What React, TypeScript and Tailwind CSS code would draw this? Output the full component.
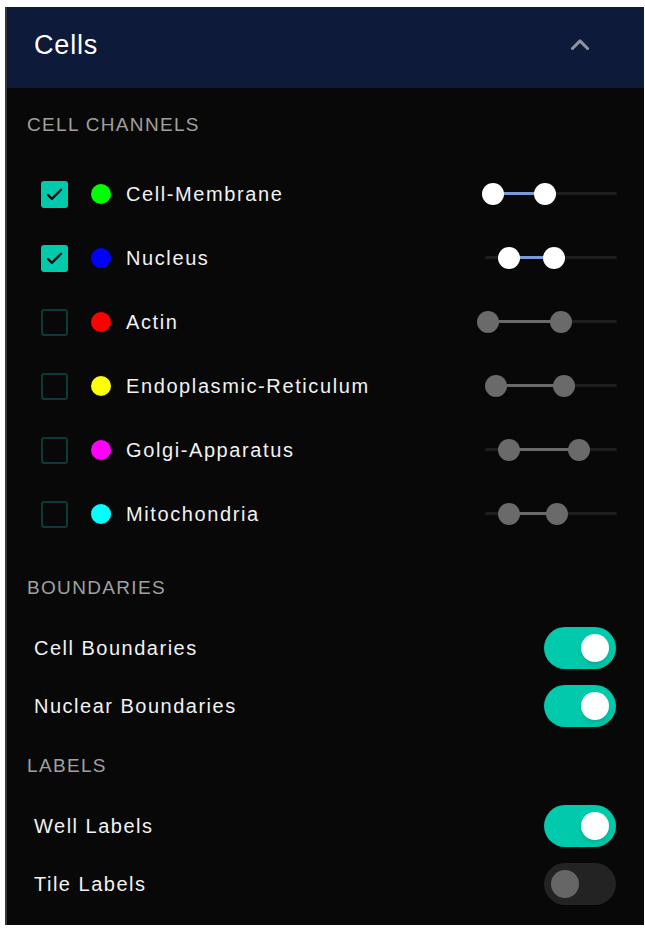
import React, { useState } from 'react';

interface Channel {
  name: string;
  color: string;
  on: boolean;
  lo: number; // thumb centre, px from track start
  hi: number;
}

const channels: Channel[] = [
  { name: 'Cell-Membrane', color: '#00ff00', on: true, lo: 8, hi: 60 },
  { name: 'Nucleus', color: '#0000ff', on: true, lo: 24, hi: 69 },
  { name: 'Actin', color: '#ff0000', on: false, lo: 3, hi: 76 },
  { name: 'Endoplasmic-Reticulum', color: '#ffff00', on: false, lo: 11, hi: 79 },
  { name: 'Golgi-Apparatus', color: '#ff00ff', on: false, lo: 24, hi: 94 },
  { name: 'Mitochondria', color: '#00ffff', on: false, lo: 24, hi: 72 },
];

const Checkbox = ({ checked }: { checked: boolean }) =>
  checked ? (
    <div className="w-[27px] h-[27px] rounded-[3px] bg-[#00c9ac] flex items-center justify-center">
      <svg width="21" height="21" viewBox="0 0 24 24" fill="none" stroke="#0b0b0b" strokeWidth="2.6" strokeLinecap="round" strokeLinejoin="round">
        <path d="M4.5 12.5l4.5 4.5L19.5 6.5" />
      </svg>
    </div>
  ) : (
    <div className="w-[27px] h-[27px] rounded-[3px] border-2 border-[#0d3a35]" />
  );

const RangeSlider = ({ on, lo, hi }: { on: boolean; lo: number; hi: number }) => (
  <div className="relative w-[132px] h-[22px] ml-auto">
    <div className="absolute left-0 right-0 top-[9px] h-[3px] rounded-full bg-[#1e1e1e]" />
    <div
      className={`absolute top-[9px] h-[3px] ${on ? 'bg-[#7d9ad8]' : 'bg-[#6a6a6a]'}`}
      style={{ left: lo, width: hi - lo }}
    />
    {[lo, hi].map((c, i) => (
      <div
        key={i}
        className={`absolute top-0 w-[22px] h-[22px] rounded-full ${on ? 'bg-white' : 'bg-[#6a6a6a]'}`}
        style={{ left: c - 11 }}
      />
    ))}
  </div>
);

const Toggle = ({ initial }: { initial: boolean }) => {
  const [on, setOn] = useState(initial);
  return (
    <button
      onClick={() => setOn(!on)}
      className={`w-[72px] h-[42px] rounded-full flex items-center px-[7px] ${
        on ? 'bg-[#00c9ac] justify-end' : 'bg-[#232323] justify-start'
      }`}
    >
      <span className={`w-[28px] h-[28px] rounded-full ${on ? 'bg-white shadow-md' : 'bg-[#666666]'}`} />
    </button>
  );
};

const SectionTitle = ({ children, className = '' }: { children: React.ReactNode; className?: string }) => (
  <div className={`h-[24px] flex items-center pl-[20px] text-[19px] tracking-[0.07em] text-[#a0a0a0] uppercase ${className}`}>
    {children}
  </div>
);

const ToggleRow = ({ label, on }: { label: string; on: boolean }) => (
  <div className="h-[58px] flex items-center pl-[27px] pr-[28px]">
    <span className="text-[20px] tracking-[0.075em] text-[#f2f2f2]">{label}</span>
    <div className="ml-auto">
      <Toggle initial={on} />
    </div>
  </div>
);

const App = () => {
  return (
    <div className="min-h-screen bg-white pt-[7px] pl-[5px] pr-[1px]" style={{ fontFamily: '"Liberation Sans", Arial, sans-serif' }}>
      <div className="h-[918px] bg-[#080808] border-l-2 border-[#363636]">
        {/* Header */}
        <div className="h-[81px] bg-[#0e1a3a] flex items-center justify-between pl-[27px] pr-[50px] pb-[5px]">
          <h2 className="text-[27px] text-white tracking-[0.03em]">Cells</h2>
          <svg width="28" height="28" viewBox="0 0 24 24" fill="none" stroke="#8e939c" strokeWidth="2.6" strokeLinecap="round" strokeLinejoin="round">
            <path d="M5.5 15l6.5-6.5 6.5 6.5" />
          </svg>
        </div>

        <SectionTitle className="mt-[25px]">Cell Channels</SectionTitle>

        <div className="mt-[25px]">
          {channels.map((ch) => (
            <div key={ch.name} className="h-[64px] flex items-center pl-[34px] pr-[27px]">
              <Checkbox checked={ch.on} />
              <span className="ml-[23px] w-[20px] h-[20px] rounded-full" style={{ backgroundColor: ch.color }} />
              <span className="ml-[15px] text-[20px] tracking-[0.08em] text-[#f2f2f2]">{ch.name}</span>
              <RangeSlider on={ch.on} lo={ch.lo} hi={ch.hi} />
            </div>
          ))}
        </div>

        <SectionTitle className="mt-[30px]">Boundaries</SectionTitle>
        <div className="mt-[19px]">
          <ToggleRow label="Cell Boundaries" on={true} />
          <ToggleRow label="Nuclear Boundaries" on={true} />
        </div>

        <SectionTitle className="mt-[19px]">Labels</SectionTitle>
        <div className="mt-[19px]">
          <ToggleRow label="Well Labels" on={true} />
          <ToggleRow label="Tile Labels" on={false} />
        </div>
      </div>
    </div>
  );
};

export default App;
